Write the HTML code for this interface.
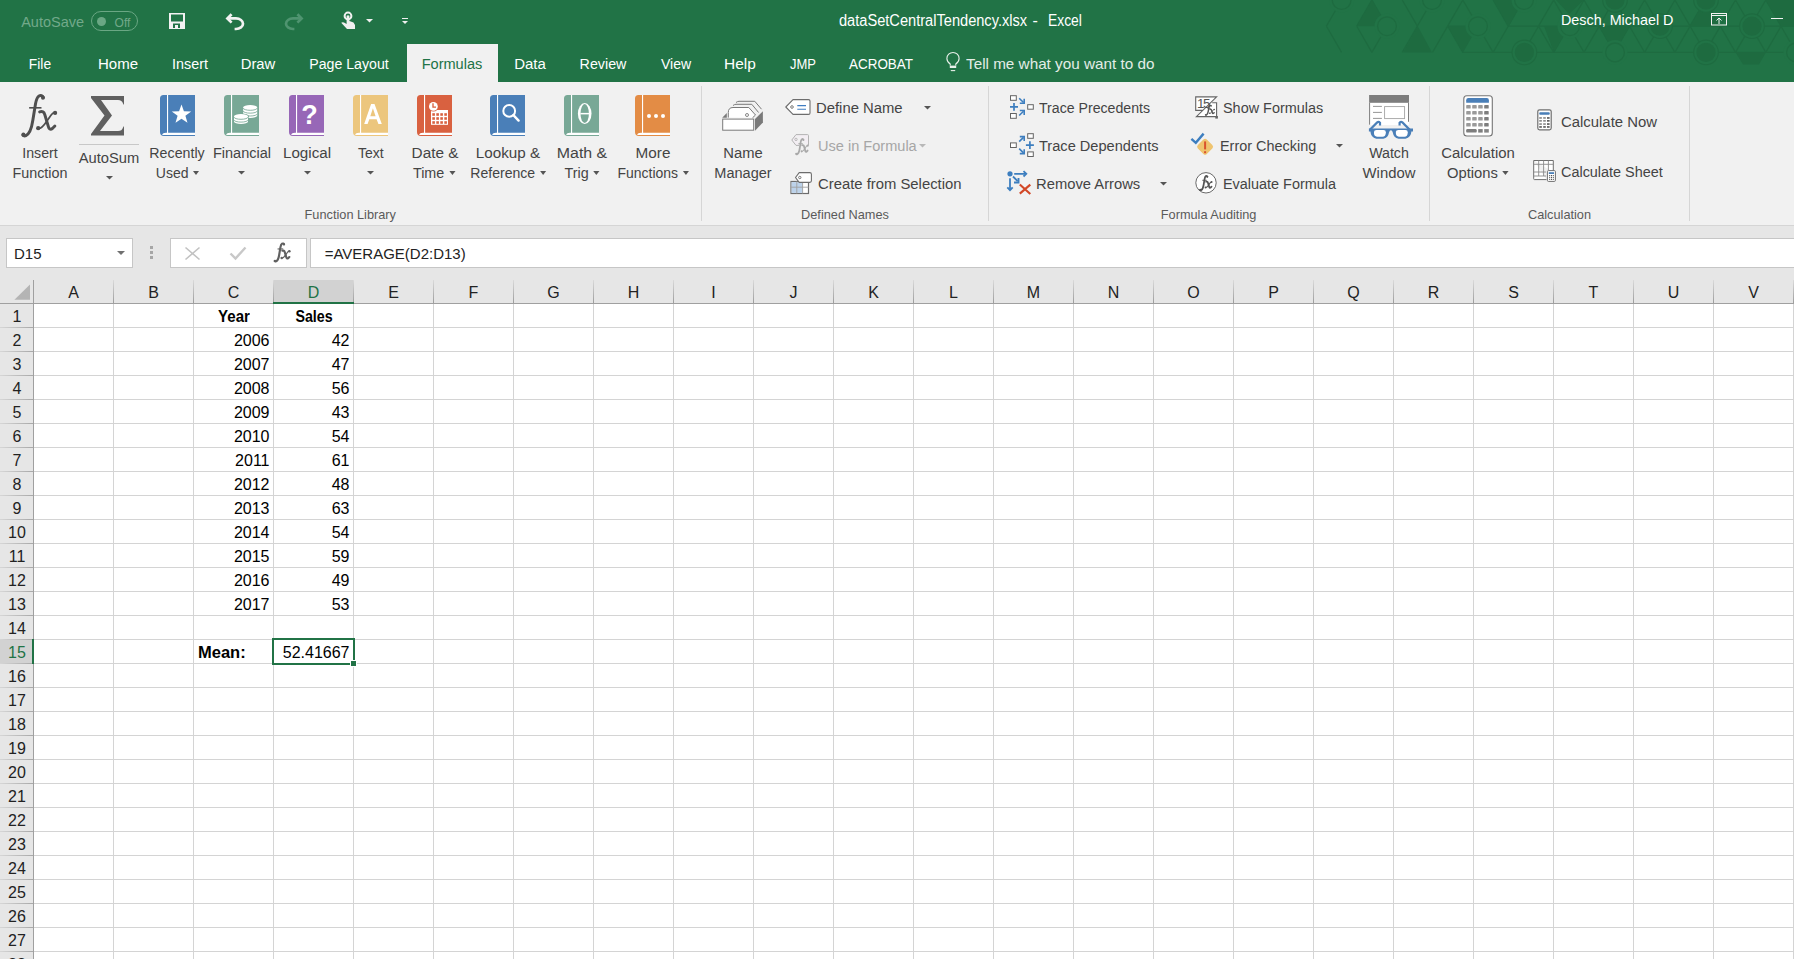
<!DOCTYPE html>
<html><head><meta charset="utf-8"><style>
*{margin:0;padding:0;box-sizing:border-box}
html,body{width:1794px;height:959px;overflow:hidden;background:#fff;font-family:"Liberation Sans",sans-serif}
.a{position:absolute}
.t{position:absolute;white-space:nowrap;line-height:1}
.dd{display:inline-block;width:0;height:0;border-left:3.5px solid transparent;border-right:3.5px solid transparent;border-top:4px solid #555;vertical-align:middle;margin-left:4.5px;position:relative;top:-1px}
svg{position:absolute;overflow:visible}
</style></head><body>
<div class="a" style="left:0px;top:0px;width:1794px;height:82px;background:#217346;"></div>
<div class="a" style="left:0px;top:82px;width:1794px;height:143px;background:#f1f1f1;"></div>
<div class="a" style="left:0px;top:225px;width:1794px;height:1px;background:#d5d5d5;"></div>
<div class="a" style="left:0px;top:226px;width:1794px;height:54px;background:#e6e6e6;"></div>
<div class="a" style="left:0px;top:280px;width:1794px;height:679px;background:#ffffff;"></div>
<div class="a" style="left:0px;top:280px;width:1794px;height:23px;background:#e6e6e6;"></div>
<div class="a" style="left:0px;top:303px;width:33px;height:656px;background:#e6e6e6;"></div>
<svg style="left:1290px;top:0" width="504" height="82" viewBox="0 0 504 82"><g opacity="1"><path d="M51.6 0.0L36.4 26.2 M81.9 0.0L97.0 26.2 M81.9 0.0L66.7 26.2 M112.2 0.0L127.4 26.2 M142.5 0.0L127.3 26.2 M172.8 0.0L188.0 26.2 M172.8 0.0L157.6 26.2 M203.1 0.0L218.2 26.2 M233.4 0.0L218.2 26.2 M263.7 0.0L278.9 26.2 M263.7 0.0L248.5 26.2 M294.0 0.0L309.2 26.2 M294.0 0.0L278.8 26.2 M324.3 0.0L339.5 26.2 M324.3 0.0L309.1 26.2 M354.6 0.0L369.8 26.2 M354.6 0.0L339.4 26.2 M384.9 0.0L400.1 26.2 M384.9 0.0L369.8 26.2 M415.2 0.0L430.4 26.2 M415.2 0.0L400.0 26.2 M445.5 0.0L460.7 26.2 M445.5 0.0L430.3 26.2 M475.8 0.0L491.0 26.2 M475.8 0.0L460.6 26.2 M506.1 0.0L521.2 26.2 M506.1 0.0L490.9 26.2 M536.4 0.0L551.6 26.2 M536.4 0.0L521.2 26.2 M36.5 26.2L51.6 52.4 M66.8 26.2L81.9 52.4 M97.0 26.2L81.9 52.4 M127.4 26.2L112.2 52.4 M157.7 26.2L188.0 26.2 M157.7 26.2L172.8 52.4 M157.7 26.2L142.5 52.4 M188.0 26.2L203.1 52.4 M218.2 26.2L248.5 26.2 M218.2 26.2L203.1 52.4 M248.5 26.2L278.8 26.2 M248.5 26.2L263.7 52.4 M248.5 26.2L233.4 52.4 M278.9 26.2L309.2 26.2 M278.9 26.2L294.0 52.4 M278.9 26.2L263.7 52.4 M309.2 26.2L339.5 26.2 M309.2 26.2L324.3 52.4 M309.2 26.2L294.0 52.4 M339.5 26.2L369.8 26.2 M339.5 26.2L354.6 52.4 M339.5 26.2L324.3 52.4 M369.8 26.2L400.0 26.2 M369.8 26.2L384.9 52.4 M369.8 26.2L354.6 52.4 M400.1 26.2L430.4 26.2 M400.1 26.2L415.2 52.4 M400.1 26.2L384.9 52.4 M430.4 26.2L460.7 26.2 M430.4 26.2L445.5 52.4 M430.4 26.2L415.2 52.4 M460.7 26.2L491.0 26.2 M460.7 26.2L475.8 52.4 M460.7 26.2L445.5 52.4 M491.0 26.2L521.2 26.2 M491.0 26.2L506.1 52.4 M491.0 26.2L475.8 52.4 M521.2 26.2L551.5 26.2 M521.2 26.2L536.4 52.4 M521.2 26.2L506.1 52.4 M551.6 26.2L581.9 26.2 M551.6 26.2L566.7 52.4 M551.6 26.2L536.4 52.4 M172.8 52.4L203.1 52.4 M203.1 52.4L233.4 52.4 M233.4 52.4L263.7 52.4 M263.7 52.4L294.0 52.4 M294.0 52.4L324.3 52.4 M324.3 52.4L354.6 52.4 M354.6 52.4L384.9 52.4 M384.9 52.4L415.2 52.4 M415.2 52.4L445.5 52.4 M445.5 52.4L475.8 52.4 M475.8 52.4L506.1 52.4 M506.1 52.4L536.4 52.4 M536.4 52.4L566.7 52.4" stroke="#1e6b40" stroke-width="1.3" fill="none"/><polygon points="82.0,0.0 97.0,26.2 67.0,26.2" fill="#1e6b40"/><polygon points="113.0,52.4 127.8,26.2 142.0,52.4" fill="#1e6b40"/><polygon points="158.0,26.2 188.0,26.2 173.0,52.4" fill="#1e6b40"/><polygon points="203.0,0.0 218.6,26.2 233.0,0.0" fill="#1e6b40"/><polygon points="254.0,26.2 278.8,26.2 264.0,52.4" fill="#1e6b40"/><polygon points="266.0,0.0 294.0,0.0 279.0,14.0" fill="#1e6b40"/><polygon points="309.0,26.2 339.6,26.2 324.3,52.4" fill="#1e6b40"/><polygon points="400.0,26.2 430.0,26.2 415.0,0.0" fill="#1e6b40"/><polygon points="445.6,52.4 475.9,52.4 469.0,64.5 453.0,64.5" fill="#1e6b40"/><polygon points="475.9,0.0 491.0,26.2 504.0,26.2 504.0,0.0" fill="#1e6b40"/><circle cx="51.6" cy="0.0" r="12.5" fill="#217346"/><circle cx="97.0" cy="26.2" r="12.5" fill="#217346"/><circle cx="188.0" cy="26.2" r="12.5" fill="#217346"/><circle cx="142.0" cy="0.0" r="12.5" fill="#217346"/><circle cx="234.0" cy="0.0" r="12.5" fill="#217346"/><circle cx="280.0" cy="26.2" r="12.5" fill="#217346"/><circle cx="325.0" cy="52.4" r="12.5" fill="#217346"/><circle cx="506.0" cy="52.4" r="12.5" fill="#217346"/><circle cx="234.4" cy="52.4" r="12.5" fill="#217346"/><circle cx="325.0" cy="0.0" r="12.5" fill="#217346"/><circle cx="370.0" cy="26.2" r="12.5" fill="#217346"/><circle cx="416.0" cy="52.4" r="12.5" fill="#217346"/><circle cx="416.0" cy="0.0" r="12.5" fill="#217346"/><circle cx="462.0" cy="26.2" r="12.5" fill="#217346"/><circle cx="51.6" cy="0.0" r="9.4" fill="none" stroke="#1e6b40" stroke-width="1.3"/><circle cx="97.0" cy="26.2" r="9.4" fill="none" stroke="#1e6b40" stroke-width="1.3"/><circle cx="188.0" cy="26.2" r="9.4" fill="none" stroke="#1e6b40" stroke-width="1.3"/><circle cx="142.0" cy="0.0" r="9.4" fill="none" stroke="#1e6b40" stroke-width="1.3"/><circle cx="234.0" cy="0.0" r="9.4" fill="none" stroke="#1e6b40" stroke-width="1.3"/><circle cx="280.0" cy="26.2" r="9.4" fill="none" stroke="#1e6b40" stroke-width="1.3"/><circle cx="325.0" cy="52.4" r="9.4" fill="none" stroke="#1e6b40" stroke-width="1.3"/><circle cx="506.0" cy="52.4" r="9.4" fill="none" stroke="#1e6b40" stroke-width="1.3"/><circle cx="234.4" cy="52.4" r="9.6" fill="#1e6b40"/><circle cx="234.4" cy="52.4" r="12.3" fill="none" stroke="#1e6b40" stroke-width="1.1"/><circle cx="325.0" cy="0.0" r="9.6" fill="#1e6b40"/><circle cx="325.0" cy="0.0" r="12.3" fill="none" stroke="#1e6b40" stroke-width="1.1"/><circle cx="370.0" cy="26.2" r="9.6" fill="#1e6b40"/><circle cx="370.0" cy="26.2" r="12.3" fill="none" stroke="#1e6b40" stroke-width="1.1"/><circle cx="416.0" cy="52.4" r="9.6" fill="#1e6b40"/><circle cx="416.0" cy="52.4" r="12.3" fill="none" stroke="#1e6b40" stroke-width="1.1"/><circle cx="416.0" cy="0.0" r="9.6" fill="#1e6b40"/><circle cx="416.0" cy="0.0" r="12.3" fill="none" stroke="#1e6b40" stroke-width="1.1"/><circle cx="462.0" cy="26.2" r="9.6" fill="#1e6b40"/><circle cx="462.0" cy="26.2" r="12.3" fill="none" stroke="#1e6b40" stroke-width="1.1"/></g></svg>
<div class="t" style="left:21.20px;top:15.33px;font-size:14.5px;color:#72a98a;font-weight:normal;">AutoSave</div>
<div class="a" style="left:91px;top:11px;width:47px;height:20px;border:1px solid #6aa784;border-radius:10px"></div>
<div class="a" style="left:96.5px;top:16.5px;width:9px;height:9px;border-radius:50%;background:#6aa784"></div>
<div class="t" style="left:114.60px;top:16.64px;font-size:12px;color:#72a98a;font-weight:normal;">Off</div>
<svg style="left:169px;top:13px" width="16" height="16" viewBox="0 0 16 16"><path fill="#f2f2f2" fill-rule="evenodd" d="M0 0H16V16H0Z M2 1.5H14V8.5H2Z M4 10.5H11V15H4Z"/><path fill="#f2f2f2" d="M6 12H9V15H6Z"/></svg>
<svg style="left:226px;top:13px" width="19" height="17" viewBox="0 0 19 17"><path d="M1.8 5.4 H10 A7 5.3 0 0 1 10 16 H8.6" fill="none" stroke="#f2f2f2" stroke-width="2.7"/><path d="M5.6 1.2 L1.4 5.4 L5.6 9.6" fill="none" stroke="#f2f2f2" stroke-width="2.7"/></svg>
<svg style="left:283.5px;top:13px" width="19" height="17" viewBox="0 0 19 17"><path d="M17.2 5.4 H9 A7 5.3 0 0 0 9 16 H10.4" fill="none" stroke="#4f9470" stroke-width="2.7"/><path d="M13.4 1.2 L17.6 5.4 L13.4 9.6" fill="none" stroke="#4f9470" stroke-width="2.7"/></svg>
<svg style="left:341px;top:11px" width="15" height="19" viewBox="0 0 15 19"><circle cx="7" cy="5" r="3.4" fill="none" stroke="#f0f0f0" stroke-width="2"/><path fill="#f0f0f0" d="M5.6 4.8 Q7 3.6 8.4 4.8 V10 L12.5 11.5 L14 14 V18 H6 L0.2 11.8 Q1.5 10.7 3 11.5 L5.6 13 Z"/></svg>
<svg style="left:365.50px;top:19px" width="7" height="3.5"><path d="M0 0H7L3.5 3.5Z" fill="#f0f0f0"/></svg>
<div class="a" style="left:402px;top:18px;width:6px;height:1px;background:#f0f0f0;"></div>
<svg style="left:402.00px;top:21px" width="6" height="3"><path d="M0 0H6L3.0 3Z" fill="#f0f0f0"/></svg>
<div class="t" style="left:838.60px;top:12.66px;font-size:16px;color:#ffffff;font-weight:normal;transform:scaleX(0.913);transform-origin:0 0">dataSetCentralTendency.xlsx</div>
<div class="t" style="left:1032.60px;top:12.66px;font-size:16px;color:#ffffff;font-weight:normal;">-</div>
<div class="t" style="left:1047.70px;top:12.66px;font-size:16px;color:#ffffff;font-weight:normal;transform:scaleX(0.866);transform-origin:0 0">Excel</div>
<div class="t" style="left:1560.60px;top:12.00px;font-size:15px;color:#ffffff;font-weight:normal;transform:scaleX(0.957);transform-origin:0 0">Desch, Michael D</div>
<svg style="left:1711px;top:13px" width="16" height="13" viewBox="0 0 16 13"><rect x="0.5" y="0.5" width="15" height="11.5" fill="none" stroke="#f2f2f2" stroke-width="1"/><path d="M0.5 2.5 H15.5" stroke="#f2f2f2" stroke-width="1"/><path d="M8 5 V11 M5.5 7.5 L8 5 L10.5 7.5" fill="none" stroke="#f2f2f2" stroke-width="1"/></svg>
<div class="a" style="left:1771px;top:18px;width:12px;height:1px;background:#f2f2f2;"></div>
<div class="a" style="left:407px;top:44px;width:91px;height:38px;background:#f1f1f1;"></div>
<div class="t" style="left:-259.55px;width:600px;text-align:center;top:56.08px;font-size:15.5px;color:#ffffff;font-weight:normal;transform:scaleX(0.891)">File</div>
<div class="t" style="left:-181.70px;width:600px;text-align:center;top:56.08px;font-size:15.5px;color:#ffffff;font-weight:normal;transform:scaleX(0.968)">Home</div>
<div class="t" style="left:-110.40px;width:600px;text-align:center;top:56.08px;font-size:15.5px;color:#ffffff;font-weight:normal;transform:scaleX(0.926)">Insert</div>
<div class="t" style="left:-41.80px;width:600px;text-align:center;top:56.08px;font-size:15.5px;color:#ffffff;font-weight:normal;transform:scaleX(0.957)">Draw</div>
<div class="t" style="left:48.60px;width:600px;text-align:center;top:56.08px;font-size:15.5px;color:#ffffff;font-weight:normal;transform:scaleX(0.912)">Page Layout</div>
<div class="t" style="left:151.70px;width:600px;text-align:center;top:56.08px;font-size:15.5px;color:#217346;font-weight:normal;transform:scaleX(0.940)">Formulas</div>
<div class="t" style="left:230.35px;width:600px;text-align:center;top:56.08px;font-size:15.5px;color:#ffffff;font-weight:normal;transform:scaleX(0.968)">Data</div>
<div class="t" style="left:303.20px;width:600px;text-align:center;top:56.08px;font-size:15.5px;color:#ffffff;font-weight:normal;transform:scaleX(0.920)">Review</div>
<div class="t" style="left:375.50px;width:600px;text-align:center;top:56.08px;font-size:15.5px;color:#ffffff;font-weight:normal;transform:scaleX(0.905)">View</div>
<div class="t" style="left:440.35px;width:600px;text-align:center;top:56.08px;font-size:15.5px;color:#ffffff;font-weight:normal;transform:scaleX(0.997)">Help</div>
<div class="t" style="left:502.60px;width:600px;text-align:center;top:56.08px;font-size:15.5px;color:#ffffff;font-weight:normal;transform:scaleX(0.839)">JMP</div>
<div class="t" style="left:580.85px;width:600px;text-align:center;top:56.08px;font-size:15.5px;color:#ffffff;font-weight:normal;transform:scaleX(0.867)">ACROBAT</div>
<svg style="left:946px;top:52px" width="14" height="20" viewBox="0 0 14 20"><path d="M4.2 13.5 V12 Q0.9 9.6 0.9 6.4 A6.1 5.9 0 0 1 13.1 6.4 Q13.1 9.6 9.8 12 V13.5" fill="none" stroke="#e8f0ea" stroke-width="1.1"/><rect x="3.8" y="13.6" width="6.4" height="2.4" fill="#e8f0ea"/><path d="M4.8 18.6 H9.2" stroke="#e8f0ea" stroke-width="1.1"/></svg>
<div class="t" style="left:966.30px;top:56.40px;font-size:15px;color:#e4ede7;font-weight:normal;transform:scaleX(1.018);transform-origin:0 0">Tell me what you want to do</div>
<div class="a" style="left:701px;top:86px;width:1px;height:135px;background:#d6d6d6;"></div>
<div class="a" style="left:988px;top:86px;width:1px;height:135px;background:#d6d6d6;"></div>
<div class="a" style="left:1429px;top:86px;width:1px;height:135px;background:#d6d6d6;"></div>
<div class="a" style="left:1689px;top:86px;width:1px;height:135px;background:#d6d6d6;"></div>
<div class="t" style="left:50.30px;width:600px;text-align:center;top:209.01px;font-size:12.75px;color:#5a5a5a;font-weight:normal;">Function Library</div>
<div class="t" style="left:545.00px;width:600px;text-align:center;top:209.01px;font-size:12.75px;color:#5a5a5a;font-weight:normal;">Defined Names</div>
<div class="t" style="left:908.60px;width:600px;text-align:center;top:209.01px;font-size:12.75px;color:#5a5a5a;font-weight:normal;">Formula Auditing</div>
<div class="t" style="left:1259.50px;width:600px;text-align:center;top:209.01px;font-size:12.75px;color:#5a5a5a;font-weight:normal;">Calculation</div>
<svg style="left:17.06px;top:89.89px" width="45.29" height="51.20" viewBox="0 0 44 50" preserveAspectRatio="none"><path d="M25.6 7.2 C25 5.4 23 4.8 21.4 5.8 C19.2 7.2 18.5 10.5 18 13.5 L15.3 30 C14.4 36 12.6 42.6 8.6 44.6 C7.4 45.2 6.2 44.8 5.8 44" fill="none" stroke="#4f4f4f" stroke-width="2.88" stroke-linecap="round"/><circle cx="25.2" cy="7.6" r="1.92" fill="#4f4f4f"/><circle cx="6.2" cy="43.6" r="1.97" fill="#4f4f4f"/><path d="M11.8 17.4 H23.8" stroke="#4f4f4f" stroke-width="1.56"/><path d="M22 21.4 C24.6 20.6 26.2 21.2 27 24 L30.4 35.5 C31 38 32.4 39.2 34.4 37.6 L36.8 35.2" fill="none" stroke="#4f4f4f" stroke-width="2.88" stroke-linecap="round"/><path d="M20.8 37.6 C23.2 37.8 25.4 35.8 28.6 31 L33 24.6 C34.4 22.6 35.8 21.8 37.2 22.2" fill="none" stroke="#4f4f4f" stroke-width="1.68"/><circle cx="20.6" cy="37.3" r="2.08" fill="#4f4f4f"/><circle cx="37" cy="22.4" r="2.08" fill="#4f4f4f"/></svg>
<div class="t" style="left:-260.00px;width:600px;text-align:center;top:145.85px;font-size:14px;color:#444444;font-weight:normal;transform:scaleX(1.014)">Insert</div>
<div class="t" style="left:-260.00px;width:600px;text-align:center;top:165.95px;font-size:14px;color:#444444;font-weight:normal;transform:scaleX(1.024)">Function</div>
<svg style="left:90px;top:96px;" width="35" height="40" viewBox="0 0 35 40"><path d="M1 0 H34 V9 L33 7.5 Q32 4 28 4 H11 L22 19.5 L10 35 H28 Q32 35 33 31.5 L34 30 V39.5 H1 V38 L14.5 19.5 L1 2Z" fill="#606060"/></svg>
<div class="a" style="left:79px;top:144px;width:60px;height:1px;background:#c8c8c8;"></div>
<div class="t" style="left:-191.40px;width:600px;text-align:center;top:150.85px;font-size:14px;color:#444444;font-weight:normal;transform:scaleX(1.052)">AutoSum</div>
<svg style="left:105.50px;top:176px" width="7" height="3.5"><path d="M0 0H7L3.5 3.5Z" fill="#555"/></svg>
<svg style="left:160px;top:95px;" width="35" height="41" viewBox="0 0 35 41"><path d="M3.5 0 H35 V41 H4 A4 4 0 0 1 0 37 V3.5 A3.5 3.5 0 0 1 3.5 0 Z" fill="#4a7fb8"/><rect x="7" y="0" width="1.1" height="38" fill="#fff"/><path d="M35 37.8 H6 Q2.6 37.8 2.2 40 H35 Z" fill="#fff"/><polygon points="21.50,9.40 23.91,16.28 31.20,16.45 25.40,20.87 27.50,27.85 21.50,23.70 15.50,27.85 17.60,20.87 11.80,16.45 19.09,16.28" fill="#fff"/></svg>
<div class="t" style="left:-122.60px;width:600px;text-align:center;top:145.85px;font-size:14px;color:#444444;font-weight:normal;transform:scaleX(1.015)">Recently</div>
<div class="t" style="left:-122.60px;width:600px;text-align:center;top:165.95px;font-size:14px;color:#444444;font-weight:normal;transform:scaleX(1.0)">Used<span class="dd"></span></div>
<svg style="left:224px;top:95px;" width="35" height="41" viewBox="0 0 35 41"><path d="M3.5 0 H35 V41 H4 A4 4 0 0 1 0 37 V3.5 A3.5 3.5 0 0 1 3.5 0 Z" fill="#78a896"/><rect x="7" y="0" width="1.1" height="38" fill="#fff"/><path d="M35 37.8 H6 Q2.6 37.8 2.2 40 H35 Z" fill="#fff"/><ellipse cx="26.2" cy="12.2" rx="7" ry="2.2" fill="#fff"/><rect x="19.2" y="12.2" width="14" height="8.55" fill="#fff"/><ellipse cx="26.2" cy="20.75" rx="7" ry="2.2" fill="#fff"/><path d="M19.2 13.1 A7 2.2 0 0 0 33.2 13.1" fill="none" stroke="#78a896" stroke-width="0.85"/><path d="M19.2 15.95 A7 2.2 0 0 0 33.2 15.95" fill="none" stroke="#78a896" stroke-width="0.85"/><path d="M19.2 18.799999999999997 A7 2.2 0 0 0 33.2 18.799999999999997" fill="none" stroke="#78a896" stroke-width="0.85"/><ellipse cx="17" cy="21.4" rx="8" ry="3" fill="#78a896"/><ellipse cx="17" cy="21.2" rx="7" ry="2.2" fill="#fff"/><rect x="10" y="21.2" width="14" height="5.599999999999998" fill="#fff"/><ellipse cx="17" cy="26.799999999999997" rx="7" ry="2.2" fill="#fff"/><path d="M10 22.099999999999998 A7 2.2 0 0 0 24 22.099999999999998" fill="none" stroke="#78a896" stroke-width="0.85"/><path d="M10 24.9 A7 2.2 0 0 0 24 24.9" fill="none" stroke="#78a896" stroke-width="0.85"/></svg>
<div class="t" style="left:-58.20px;width:600px;text-align:center;top:145.85px;font-size:14px;color:#444444;font-weight:normal;transform:scaleX(1.036)">Financial</div>
<svg style="left:238.30px;top:171px" width="7" height="3.5"><path d="M0 0H7L3.5 3.5Z" fill="#555"/></svg>
<svg style="left:289px;top:95px;" width="35" height="41" viewBox="0 0 35 41"><path d="M3.5 0 H35 V41 H4 A4 4 0 0 1 0 37 V3.5 A3.5 3.5 0 0 1 3.5 0 Z" fill="#9767b7"/><rect x="7" y="0" width="1.1" height="38" fill="#fff"/><path d="M35 37.8 H6 Q2.6 37.8 2.2 40 H35 Z" fill="#fff"/><text x="20.6" y="29" font-family="Liberation Sans" font-weight="bold" font-size="27" fill="#fff" text-anchor="middle">?</text></svg>
<div class="t" style="left:7.10px;width:600px;text-align:center;top:145.85px;font-size:14px;color:#444444;font-weight:normal;transform:scaleX(1.084)">Logical</div>
<svg style="left:303.60px;top:171px" width="7" height="3.5"><path d="M0 0H7L3.5 3.5Z" fill="#555"/></svg>
<svg style="left:353px;top:95px;" width="35" height="41" viewBox="0 0 35 41"><path d="M3.5 0 H35 V41 H4 A4 4 0 0 1 0 37 V3.5 A3.5 3.5 0 0 1 3.5 0 Z" fill="#ecc67d"/><rect x="7" y="0" width="1.1" height="38" fill="#fff"/><path d="M35 37.8 H6 Q2.6 37.8 2.2 40 H35 Z" fill="#fff"/><path d="M11.2 29 L18.1 9 H21.5 L28.8 29 H25.4 L23.6 24.2 H16.3 L14.6 29 Z M17.3 21.3 H22.6 L19.9 13.2 Z" fill="#fff" fill-rule="evenodd"/></svg>
<div class="t" style="left:70.75px;width:600px;text-align:center;top:145.85px;font-size:14px;color:#444444;font-weight:normal;transform:scaleX(1.0)">Text</div>
<svg style="left:367.25px;top:171px" width="7" height="3.5"><path d="M0 0H7L3.5 3.5Z" fill="#555"/></svg>
<svg style="left:417px;top:95px;" width="35" height="41" viewBox="0 0 35 41"><path d="M3.5 0 H35 V41 H4 A4 4 0 0 1 0 37 V3.5 A3.5 3.5 0 0 1 3.5 0 Z" fill="#d96140"/><rect x="7" y="0" width="1.1" height="38" fill="#fff"/><path d="M35 37.8 H6 Q2.6 37.8 2.2 40 H35 Z" fill="#fff"/><rect x="14" y="15" width="17" height="14.8" fill="#fff"/><rect x="15.3" y="18.2" width="2.6" height="2.6" fill="#d96140"/><rect x="19.3" y="18.2" width="2.6" height="2.6" fill="#d96140"/><rect x="23.3" y="18.2" width="2.6" height="2.6" fill="#d96140"/><rect x="27.3" y="18.2" width="2.6" height="2.6" fill="#d96140"/><rect x="15.3" y="22.2" width="2.6" height="2.6" fill="#d96140"/><rect x="19.3" y="22.2" width="2.6" height="2.6" fill="#d96140"/><rect x="23.3" y="22.2" width="2.6" height="2.6" fill="#d96140"/><rect x="27.3" y="22.2" width="2.6" height="2.6" fill="#d96140"/><rect x="15.3" y="26.2" width="2.6" height="2.6" fill="#d96140"/><rect x="19.3" y="26.2" width="2.6" height="2.6" fill="#d96140"/><rect x="23.3" y="26.2" width="2.6" height="2.6" fill="#d96140"/><rect x="27.3" y="26.2" width="2.6" height="2.6" fill="#d96140"/><circle cx="16.4" cy="11.4" r="5.2" fill="#d96140"/><circle cx="16.4" cy="11.4" r="4.4" fill="#fff"/><path d="M16 8.3 V12.1 H19" fill="none" stroke="#d96140" stroke-width="1.35"/></svg>
<div class="t" style="left:134.75px;width:600px;text-align:center;top:145.85px;font-size:14px;color:#444444;font-weight:normal;transform:scaleX(1.095)">Date &amp;</div>
<div class="t" style="left:134.30px;width:600px;text-align:center;top:165.95px;font-size:14px;color:#444444;font-weight:normal;transform:scaleX(1.024)">Time<span class="dd"></span></div>
<svg style="left:490px;top:95px;" width="35" height="41" viewBox="0 0 35 41"><path d="M3.5 0 H35 V41 H4 A4 4 0 0 1 0 37 V3.5 A3.5 3.5 0 0 1 3.5 0 Z" fill="#4a7fb8"/><rect x="7" y="0" width="1.1" height="38" fill="#fff"/><path d="M35 37.8 H6 Q2.6 37.8 2.2 40 H35 Z" fill="#fff"/><circle cx="19.2" cy="15.9" r="5.9" fill="none" stroke="#fff" stroke-width="2"/><path d="M23.4 20.2 L28.6 25.6" stroke="#fff" stroke-width="2.4" stroke-linecap="round"/></svg>
<div class="t" style="left:208.10px;width:600px;text-align:center;top:145.85px;font-size:14px;color:#444444;font-weight:normal;transform:scaleX(1.088)">Lookup &amp;</div>
<div class="t" style="left:208.00px;width:600px;text-align:center;top:165.95px;font-size:14px;color:#444444;font-weight:normal;transform:scaleX(1.004)">Reference<span class="dd"></span></div>
<svg style="left:564px;top:95px;" width="35" height="41" viewBox="0 0 35 41"><path d="M3.5 0 H35 V41 H4 A4 4 0 0 1 0 37 V3.5 A3.5 3.5 0 0 1 3.5 0 Z" fill="#78a896"/><rect x="7" y="0" width="1.1" height="38" fill="#fff"/><path d="M35 37.8 H6 Q2.6 37.8 2.2 40 H35 Z" fill="#fff"/><ellipse cx="20.7" cy="18.6" rx="6.8" ry="10.5" fill="#fff"/><ellipse cx="20.7" cy="18.6" rx="4.2" ry="9.5" fill="#78a896"/><rect x="16.3" y="17.9" width="8.8" height="1.5" fill="#fff"/></svg>
<div class="t" style="left:282.00px;width:600px;text-align:center;top:145.85px;font-size:14px;color:#444444;font-weight:normal;transform:scaleX(1.136)">Math &amp;</div>
<div class="t" style="left:282.00px;width:600px;text-align:center;top:165.95px;font-size:14px;color:#444444;font-weight:normal;transform:scaleX(1.024)">Trig<span class="dd"></span></div>
<svg style="left:635px;top:95px;" width="35" height="41" viewBox="0 0 35 41"><path d="M3.5 0 H35 V41 H4 A4 4 0 0 1 0 37 V3.5 A3.5 3.5 0 0 1 3.5 0 Z" fill="#e38c45"/><rect x="7" y="0" width="1.1" height="38" fill="#fff"/><path d="M35 37.8 H6 Q2.6 37.8 2.2 40 H35 Z" fill="#fff"/><circle cx="14" cy="21" r="2" fill="#fff"/><circle cx="21" cy="21" r="2" fill="#fff"/><circle cx="28" cy="21" r="2" fill="#fff"/></svg>
<div class="t" style="left:352.80px;width:600px;text-align:center;top:145.85px;font-size:14px;color:#444444;font-weight:normal;transform:scaleX(1.091)">More</div>
<div class="t" style="left:352.50px;width:600px;text-align:center;top:165.95px;font-size:14px;color:#444444;font-weight:normal;transform:scaleX(0.998)">Functions<span class="dd"></span></div>
<svg style="left:715px;top:95px;" width="55" height="42" viewBox="0 0 55 42"><path d="M21 7.5 Q22.5 6.3 24 6.3 H39.8 L46.5 14.2" fill="none" stroke="#7a7a7a" stroke-width="1"/><path d="M18 10.5 Q19.5 9.3 21 9.3 H36.8 L43.6 17.5" fill="none" stroke="#7a7a7a" stroke-width="1"/><path d="M13.3 22.6 V17.5 Q13.3 12.5 18 12.5 H33.8 L40.5 20 L37.5 22.8" fill="#fff" stroke="#7a7a7a" stroke-width="1"/><circle cx="32" cy="20" r="1.5" fill="none" stroke="#7a7a7a" stroke-width="0.9"/><path d="M7.2 22.8 L11.8 18 V22.8 Z" fill="#7a7a7a"/><rect x="7.7" y="24.1" width="31" height="11.1" fill="#fff" stroke="#7a7a7a" stroke-width="1"/><path d="M40 23.9 L47.9 16.2 V27.6 L40 35.7 Z" fill="#7a7a7a"/></svg>
<div class="t" style="left:443.20px;width:600px;text-align:center;top:145.85px;font-size:14px;color:#444444;font-weight:normal;transform:scaleX(1.056)">Name</div>
<div class="t" style="left:442.60px;width:600px;text-align:center;top:165.95px;font-size:14px;color:#444444;font-weight:normal;transform:scaleX(1.037)">Manager</div>
<svg style="left:785px;top:99px;" width="26" height="16" viewBox="0 0 26 16"><path d="M8 0.6 H23.5 Q25 0.6 25 2 V14 Q25 15.4 23.5 15.4 H8 L0.8 8 Z" fill="#fff" stroke="#6d6d6d" stroke-width="1.1" stroke-linejoin="round"/><circle cx="7" cy="8" r="1.3" fill="none" stroke="#6d6d6d" stroke-width="0.9"/><path d="M12.3 6.6 H21 M12.3 10.3 H21" stroke="#3f7dc1" stroke-width="1.1"/></svg>
<div class="t" style="left:816.00px;top:101.25px;font-size:14px;color:#444444;font-weight:normal;transform:scaleX(1.06);transform-origin:0 0">Define Name</div>
<svg style="left:923.50px;top:105.5px" width="7" height="3.5"><path d="M0 0H7L3.5 3.5Z" fill="#555"/></svg>
<svg style="left:791px;top:134px;" width="20" height="22" viewBox="0 0 20 22"><path d="M5 0.6 H16.5 Q17.5 0.6 17.5 1.6 V11.5 M8 11.4 H5 L0.8 6 L5 0.6" fill="#f3eef3" stroke="#b3b3b3" stroke-width="1"/><circle cx="5" cy="5.4" r="1.2" fill="none" stroke="#b3b3b3" stroke-width="0.9"/></svg>
<svg style="left:794.22px;top:137.07px" width="16.31" height="19.28" viewBox="0 0 44 50" preserveAspectRatio="none"><path d="M25.6 7.2 C25 5.4 23 4.8 21.4 5.8 C19.2 7.2 18.5 10.5 18 13.5 L15.3 30 C14.4 36 12.6 42.6 8.6 44.6 C7.4 45.2 6.2 44.8 5.8 44" fill="none" stroke="#a9a9a9" stroke-width="4.8" stroke-linecap="round"/><circle cx="25.2" cy="7.6" r="2.47" fill="#a9a9a9"/><circle cx="6.2" cy="43.6" r="2.55" fill="#a9a9a9"/><path d="M11.8 17.4 H23.8" stroke="#a9a9a9" stroke-width="2.6"/><path d="M22 21.4 C24.6 20.6 26.2 21.2 27 24 L30.4 35.5 C31 38 32.4 39.2 34.4 37.6 L36.8 35.2" fill="none" stroke="#a9a9a9" stroke-width="4.8" stroke-linecap="round"/><path d="M20.8 37.6 C23.2 37.8 25.4 35.8 28.6 31 L33 24.6 C34.4 22.6 35.8 21.8 37.2 22.2" fill="none" stroke="#a9a9a9" stroke-width="2.8"/><circle cx="20.6" cy="37.3" r="2.69" fill="#a9a9a9"/><circle cx="37" cy="22.4" r="2.69" fill="#a9a9a9"/></svg>
<div class="t" style="left:818.00px;top:139.25px;font-size:14px;color:#a6a6a6;font-weight:normal;transform:scaleX(1.04);transform-origin:0 0">Use in Formula</div>
<svg style="left:918.50px;top:143.5px" width="7" height="3.5"><path d="M0 0H7L3.5 3.5Z" fill="#b8b8b8"/></svg>
<svg style="left:790px;top:172px;" width="23" height="23" viewBox="0 0 23 23"><rect x="1" y="9.5" width="17.5" height="12" fill="#fff" stroke="#6d6d6d" stroke-width="1.2"/><rect x="1.6" y="10.1" width="11" height="10.8" fill="#bcd2ea"/><path d="M6.8 9.5 V21.5 M12.6 9.5 V21.5 M1 15.2 H18.5" stroke="#a0a0a0" stroke-width="0.9"/><path d="M9.2 0.6 H19.8 Q21.4 0.6 21.4 2.2 V8.8 Q21.4 10.4 19.8 10.4 H9.2 L5.5 5.5 Z" fill="#fff" stroke="#6d6d6d" stroke-width="1.1" stroke-linejoin="round"/><circle cx="9.8" cy="5.5" r="1.2" fill="none" stroke="#6d6d6d" stroke-width="0.9"/></svg>
<div class="t" style="left:818.00px;top:177.25px;font-size:14px;color:#444444;font-weight:normal;transform:scaleX(1.06);transform-origin:0 0">Create from Selection</div>
<svg style="left:1003px;top:92px;" width="37" height="105" viewBox="0 0 37 105"><rect x="7.5" y="3.7" width="5.800000000000001" height="4.6000000000000005" fill="#fff" stroke="#646464" stroke-width="1"/><path d="M7 14.9 H15 M11 11.0 V18.8" stroke="#3d7ebf" stroke-width="1.7"/><rect x="7.5" y="21.5" width="5.800000000000001" height="4.800000000000001" fill="#fff" stroke="#646464" stroke-width="1"/><rect x="24.7" y="12.7" width="5.600000000000001" height="4.5" fill="#fff" stroke="#646464" stroke-width="1"/><path d="M16.2 6.2 L20.49 10.49" stroke="#3d7ebf" stroke-width="1.6"/><path d="M16.80 11.20 L21.20 11.20 L21.20 6.80" fill="none" stroke="#3d7ebf" stroke-width="1.6" stroke-linejoin="miter"/><path d="M16.2 23.5 L20.49 19.21" stroke="#3d7ebf" stroke-width="1.6"/><path d="M21.20 22.90 L21.20 18.50 L16.80 18.50" fill="none" stroke="#3d7ebf" stroke-width="1.6" stroke-linejoin="miter"/><rect x="7.5" y="50.9" width="5.800000000000001" height="4.600000000000001" fill="#fff" stroke="#646464" stroke-width="1"/><rect x="24.7" y="41.7" width="5.600000000000001" height="4.599999999999994" fill="#fff" stroke="#646464" stroke-width="1"/><path d="M22.9 53.1 H30.9 M26.9 49.2 V57.0" stroke="#3d7ebf" stroke-width="1.7"/><rect x="24.7" y="59.9" width="5.600000000000001" height="4.600000000000001" fill="#fff" stroke="#646464" stroke-width="1"/><path d="M16.2 49.6 L20.49 45.31" stroke="#3d7ebf" stroke-width="1.6"/><path d="M21.20 49.00 L21.20 44.60 L16.80 44.60" fill="none" stroke="#3d7ebf" stroke-width="1.6" stroke-linejoin="miter"/><path d="M16.2 56.6 L20.49 60.89" stroke="#3d7ebf" stroke-width="1.6"/><path d="M16.80 61.60 L21.20 61.60 L21.20 57.20" fill="none" stroke="#3d7ebf" stroke-width="1.6" stroke-linejoin="miter"/><circle cx="7" cy="81.8" r="2.6" fill="#3d7ebf"/><path d="M11.2 81.8 H22.8 M7 86.3 V97.6 M10 84.5 L14.6 89.1" stroke="#3d7ebf" stroke-width="1.8"/><path d="M20.5 79.2 L23.3 81.8 L20.5 84.5 M4.3 95.3 L7 98.2 L9.7 95.3" fill="none" stroke="#3d7ebf" stroke-width="1.8"/><path d="M15.5 86 V90.5 H11" fill="none" stroke="#3d7ebf" stroke-width="1.9"/><path d="M16.8 92.5 L27.3 102 M16.8 101.6 L27.3 92.6" stroke="#d24726" stroke-width="2.1"/></svg>
<div class="t" style="left:1039.00px;top:101.25px;font-size:14px;color:#444444;font-weight:normal;transform:scaleX(1.01);transform-origin:0 0">Trace Precedents</div>
<div class="t" style="left:1039.00px;top:139.25px;font-size:14px;color:#444444;font-weight:normal;transform:scaleX(1.042);transform-origin:0 0">Trace Dependents</div>
<div class="t" style="left:1036.00px;top:177.25px;font-size:14px;color:#444444;font-weight:normal;transform:scaleX(1.055);transform-origin:0 0">Remove Arrows</div>
<svg style="left:1160.00px;top:181.5px" width="7" height="3.5"><path d="M0 0H7L3.5 3.5Z" fill="#555"/></svg>
<svg style="left:1186px;top:92px;" width="36" height="105" viewBox="0 0 36 105"><path d="M9.8 4.6 H30.8 L10.4 25 H30.8 V10.3 H26.3 L16.6 18.4 H9.8 Z" fill="#fff"/><path d="M16.6 18.4 H9.7 V4.9 H30.6 L10.4 24.6 H30.6 V10.8 H26.2" fill="none" stroke="#646464" stroke-width="1.1"/><text x="10.9" y="15.7" font-family="Liberation Sans" font-size="13.4" fill="#555" letter-spacing="-1.3">15</text><rect x="29.3" y="24" width="2.6" height="2.6" fill="#646464"/><rect x="12.8" y="48.4" width="12.6" height="12.6" rx="2.4" transform="rotate(45 19.1 54.7)" fill="#efc46f"/><path d="M19.1 49.4 V57.4" stroke="#d9532d" stroke-width="2"/><rect x="18.1" y="59.2" width="2" height="2" fill="#d9532d"/><path d="M5.4 46.8 L9.8 50.8 L17.6 41.6" fill="none" stroke="#3d7ebf" stroke-width="2.4"/><circle cx="20" cy="90.8" r="10.2" fill="#fff" stroke="#6a6a6a" stroke-width="1"/></svg>
<svg style="left:1197.74px;top:173.87px" width="16.18" height="18.07" viewBox="0 0 44 50" preserveAspectRatio="none"><path d="M25.6 7.2 C25 5.4 23 4.8 21.4 5.8 C19.2 7.2 18.5 10.5 18 13.5 L15.3 30 C14.4 36 12.6 42.6 8.6 44.6 C7.4 45.2 6.2 44.8 5.8 44" fill="none" stroke="#555555" stroke-width="4.8" stroke-linecap="round"/><circle cx="25.2" cy="7.6" r="2.47" fill="#555555"/><circle cx="6.2" cy="43.6" r="2.55" fill="#555555"/><path d="M11.8 17.4 H23.8" stroke="#555555" stroke-width="2.6"/><path d="M22 21.4 C24.6 20.6 26.2 21.2 27 24 L30.4 35.5 C31 38 32.4 39.2 34.4 37.6 L36.8 35.2" fill="none" stroke="#555555" stroke-width="4.8" stroke-linecap="round"/><path d="M20.8 37.6 C23.2 37.8 25.4 35.8 28.6 31 L33 24.6 C34.4 22.6 35.8 21.8 37.2 22.2" fill="none" stroke="#555555" stroke-width="2.8"/><circle cx="20.6" cy="37.3" r="2.69" fill="#555555"/><circle cx="37" cy="22.4" r="2.69" fill="#555555"/></svg>
<svg style="left:1203.97px;top:103.98px" width="12.16" height="12.41" viewBox="0 0 44 50" preserveAspectRatio="none"><path d="M25.6 7.2 C25 5.4 23 4.8 21.4 5.8 C19.2 7.2 18.5 10.5 18 13.5 L15.3 30 C14.4 36 12.6 42.6 8.6 44.6 C7.4 45.2 6.2 44.8 5.8 44" fill="none" stroke="#555555" stroke-width="5.28" stroke-linecap="round"/><circle cx="25.2" cy="7.6" r="2.60" fill="#555555"/><circle cx="6.2" cy="43.6" r="2.67" fill="#555555"/><path d="M11.8 17.4 H23.8" stroke="#555555" stroke-width="2.8600000000000003"/><path d="M22 21.4 C24.6 20.6 26.2 21.2 27 24 L30.4 35.5 C31 38 32.4 39.2 34.4 37.6 L36.8 35.2" fill="none" stroke="#555555" stroke-width="5.28" stroke-linecap="round"/><path d="M20.8 37.6 C23.2 37.8 25.4 35.8 28.6 31 L33 24.6 C34.4 22.6 35.8 21.8 37.2 22.2" fill="none" stroke="#555555" stroke-width="3.08"/><circle cx="20.6" cy="37.3" r="2.82" fill="#555555"/><circle cx="37" cy="22.4" r="2.82" fill="#555555"/></svg>
<div class="t" style="left:1223.00px;top:101.25px;font-size:14px;color:#444444;font-weight:normal;transform:scaleX(1.03);transform-origin:0 0">Show Formulas</div>
<div class="t" style="left:1220.00px;top:139.25px;font-size:14px;color:#444444;font-weight:normal;transform:scaleX(1.03);transform-origin:0 0">Error Checking</div>
<svg style="left:1336.00px;top:143.5px" width="7" height="3.5"><path d="M0 0H7L3.5 3.5Z" fill="#555"/></svg>
<div class="t" style="left:1223.00px;top:177.25px;font-size:14px;color:#444444;font-weight:normal;transform:scaleX(1.03);transform-origin:0 0">Evaluate Formula</div>
<svg style="left:1360px;top:90px;" width="60" height="50" viewBox="0 0 60 50"><rect x="9.1" y="5" width="39.9" height="30" fill="#fff"/><rect x="9.1" y="5" width="39.9" height="7.8" fill="#7d7d7d"/><path d="M9.6 12.8 V34.7 M48.5 12.8 V31.8" stroke="#7d7d7d" stroke-width="1"/><path d="M13 16.4 H21.9 M13 22.4 H21.9 M13 28.4 H21.9" stroke="#8a8a8a" stroke-width="0.9"/><rect x="24.6" y="16.6" width="20" height="12" fill="#fff" stroke="#a3a3a3" stroke-width="0.9"/><path d="M9.6 40 L17.2 32.4 Q18.6 31.3 20 32.8 V35.5 M50 40 L42.4 32.4 Q41 31.3 39.6 32.8 V35.5" fill="none" stroke="#4a7fb8" stroke-width="2.2"/><path d="M8.9 38.5 H53 V41.6 H51.4 Q51 47.8 45.5 48.7 H38.5 Q33.6 47.9 32.8 42.6 Q32.2 40.2 30.9 40.2 Q29.6 40.2 29 42.6 Q28.2 47.9 23.3 48.7 H16.2 Q10.9 47.8 10.4 41.6 H8.9 Z" fill="#4a7fb8"/><path d="M14 41.8 Q14 40 16.5 40 H23.5 Q25.9 40 25.9 42.4 Q25.7 46.6 22.5 46.7 H17 Q14.2 46.4 14 43.6 Z" fill="#fff"/><path d="M35.9 41.8 Q35.9 40 38.4 40 H45.4 Q47.8 40 47.8 42.4 Q47.6 46.6 44.4 46.7 H38.9 Q36.1 46.4 35.9 43.6 Z" fill="#fff"/></svg>
<div class="t" style="left:1088.90px;width:600px;text-align:center;top:145.85px;font-size:14px;color:#444444;font-weight:normal;transform:scaleX(1.015)">Watch</div>
<div class="t" style="left:1088.50px;width:600px;text-align:center;top:165.95px;font-size:14px;color:#444444;font-weight:normal;transform:scaleX(1.061)">Window</div>
<svg style="left:1455px;top:90px;" width="45" height="50" viewBox="0 0 45 50"><rect x="8.8" y="5.7" width="28.5" height="40.3" rx="3" fill="#fff" stroke="#767676" stroke-width="1.1"/><path d="M11.2 12.8 V10.2 Q11.2 8.1 13.3 8.1 H31.8 Q33.9 8.1 33.9 10.2 V12.8 Z" fill="#4a7fb8"/><rect x="11.2" y="15.1" width="4.5" height="3.5" rx="0.6" fill="#9a9a9a"/><rect x="17.2" y="15.1" width="4.5" height="3.5" rx="0.6" fill="#9a9a9a"/><rect x="23.2" y="15.1" width="4.5" height="3.5" rx="0.6" fill="#9a9a9a"/><rect x="29.2" y="15.1" width="4.5" height="3.5" rx="0.6" fill="#7e7e7e"/><rect x="11.2" y="21.1" width="4.5" height="3.5" rx="0.6" fill="#9a9a9a"/><rect x="17.2" y="21.1" width="4.5" height="3.5" rx="0.6" fill="#9a9a9a"/><rect x="23.2" y="21.1" width="4.5" height="3.5" rx="0.6" fill="#9a9a9a"/><rect x="29.2" y="21.1" width="4.5" height="3.5" rx="0.6" fill="#7e7e7e"/><rect x="11.2" y="27.1" width="4.5" height="3.5" rx="0.6" fill="#9a9a9a"/><rect x="17.2" y="27.1" width="4.5" height="3.5" rx="0.6" fill="#9a9a9a"/><rect x="23.2" y="27.1" width="4.5" height="3.5" rx="0.6" fill="#9a9a9a"/><rect x="29.2" y="27.1" width="4.5" height="3.5" rx="0.6" fill="#7e7e7e"/><rect x="11.2" y="33.1" width="4.5" height="3.5" rx="0.6" fill="#9a9a9a"/><rect x="17.2" y="33.1" width="4.5" height="3.5" rx="0.6" fill="#9a9a9a"/><rect x="23.2" y="33.1" width="4.5" height="3.5" rx="0.6" fill="#9a9a9a"/><rect x="29.2" y="33.1" width="4.5" height="3.5" rx="0.6" fill="#7e7e7e"/><rect x="11.2" y="39.1" width="10.5" height="3.5" rx="1.2" fill="#7e7e7e"/><rect x="23.2" y="39.1" width="4.5" height="3.5" fill="#7e7e7e"/><rect x="29.2" y="39.1" width="4.6" height="3.5" fill="#858585"/></svg>
<div class="t" style="left:1178.00px;width:600px;text-align:center;top:145.85px;font-size:14px;color:#444444;font-weight:normal;transform:scaleX(1.064)">Calculation</div>
<div class="t" style="left:1178.20px;width:600px;text-align:center;top:165.95px;font-size:14px;color:#444444;font-weight:normal;transform:scaleX(1.054)">Options<span class="dd"></span></div>
<svg style="left:1528px;top:105px;" width="32" height="80" viewBox="0 0 32 80"><rect x="9.8" y="4.8" width="13.4" height="20" rx="1.8" fill="#fff" stroke="#6e6e6e" stroke-width="1.2"/><rect x="11.25" y="7.3" width="10.5" height="2.5" rx="1" fill="#4a7fb8"/><rect x="11.25" y="12.1" width="2.6" height="1.7" fill="#8e8e8e"/><rect x="15.2" y="12.1" width="2.6" height="1.7" fill="#8e8e8e"/><rect x="19.0" y="12.1" width="2.6" height="1.7" fill="#5f5f5f"/><rect x="11.25" y="15.0" width="2.6" height="1.7" fill="#8e8e8e"/><rect x="15.2" y="15.0" width="2.6" height="1.7" fill="#8e8e8e"/><rect x="19.0" y="15.0" width="2.6" height="1.7" fill="#5f5f5f"/><rect x="11.25" y="18.2" width="2.6" height="1.7" fill="#8e8e8e"/><rect x="15.2" y="18.2" width="2.6" height="1.7" fill="#8e8e8e"/><rect x="19.0" y="18.2" width="2.6" height="1.7" fill="#5f5f5f"/><rect x="11.25" y="21.1" width="2.6" height="1.7" fill="#5f5f5f"/><rect x="15.2" y="21.1" width="2.6" height="1.7" fill="#5f5f5f"/><rect x="19.0" y="21.1" width="2.6" height="1.7" fill="#5f5f5f"/><path d="M5.7 55.5 H25.3 V67 M5.7 55.5 V73.8 Q5.7 74.6 6.5 74.6 H18.5" fill="#fff" stroke="#6e6e6e" stroke-width="1"/><path d="M5.7 59.3 H25.3 M5.7 67 H18 M5.7 71 H18 M10.7 55.5 V71 M15.6 55.5 V71 M20.4 55.5 V65" stroke="#8a8a8a" stroke-width="0.9"/><rect x="19.4" y="65.6" width="8" height="10.8" rx="1" fill="#fff" stroke="#6e6e6e" stroke-width="1"/><rect x="20.8" y="67.2" width="5.2" height="1.8" fill="#4a7fb8"/><path d="M21.2 70.6 h1 M23 70.6 h1 M24.8 70.6 h1 M21.2 72.6 h1 M23 72.6 h1 M24.8 72.6 h1 M21.2 74.5 h1 M23 74.5 h1 M24.8 74.5 h1" stroke="#555" stroke-width="1.2"/></svg>
<div class="t" style="left:1561.00px;top:115.25px;font-size:14px;color:#444444;font-weight:normal;transform:scaleX(1.063);transform-origin:0 0">Calculate Now</div>
<div class="t" style="left:1561.00px;top:164.75px;font-size:14px;color:#444444;font-weight:normal;transform:scaleX(1.03);transform-origin:0 0">Calculate Sheet</div>
<div class="a" style="left:6px;top:238px;width:127px;height:30px;background:#fff;border:1px solid #c6c6c6"></div>
<div class="t" style="left:14.00px;top:246.30px;font-size:15px;color:#222;font-weight:normal;">D15</div>
<svg style="left:116.60px;top:250.9px" width="8" height="4"><path d="M0 0H8L4.0 4Z" fill="#707070"/></svg>
<div class="a" style="left:150px;top:246px;width:3px;height:3px;background:#a6a6a6;"></div>
<div class="a" style="left:150px;top:251px;width:3px;height:3px;background:#a6a6a6;"></div>
<div class="a" style="left:150px;top:256px;width:3px;height:3px;background:#a6a6a6;"></div>
<div class="a" style="left:170px;top:238px;width:137px;height:30px;background:#fff;border:1px solid #c6c6c6"></div>
<div class="a" style="left:310px;top:238px;width:1490px;height:30px;background:#fff;border:1px solid #c6c6c6"></div>
<svg style="left:183px;top:245px;" width="20" height="17" viewBox="0 0 20 17"><path d="M2.5 2.5 L16.5 14.5 M16.5 2.5 L2.5 14.5" stroke="#c2c2c2" stroke-width="1.6"/></svg>
<svg style="left:228px;top:245px;" width="20" height="17" viewBox="0 0 20 17"><path d="M2.5 8.5 L7.5 13.5 L17.5 2.5" fill="none" stroke="#c8c8c8" stroke-width="2.4"/></svg>
<svg style="left:271.74px;top:240.94px" width="20.71" height="22.89" viewBox="0 0 44 50" preserveAspectRatio="none"><path d="M25.6 7.2 C25 5.4 23 4.8 21.4 5.8 C19.2 7.2 18.5 10.5 18 13.5 L15.3 30 C14.4 36 12.6 42.6 8.6 44.6 C7.4 45.2 6.2 44.8 5.8 44" fill="none" stroke="#606060" stroke-width="4.56" stroke-linecap="round"/><circle cx="25.2" cy="7.6" r="2.41" fill="#606060"/><circle cx="6.2" cy="43.6" r="2.48" fill="#606060"/><path d="M11.8 17.4 H23.8" stroke="#606060" stroke-width="2.4699999999999998"/><path d="M22 21.4 C24.6 20.6 26.2 21.2 27 24 L30.4 35.5 C31 38 32.4 39.2 34.4 37.6 L36.8 35.2" fill="none" stroke="#606060" stroke-width="4.56" stroke-linecap="round"/><path d="M20.8 37.6 C23.2 37.8 25.4 35.8 28.6 31 L33 24.6 C34.4 22.6 35.8 21.8 37.2 22.2" fill="none" stroke="#606060" stroke-width="2.6599999999999997"/><circle cx="20.6" cy="37.3" r="2.62" fill="#606060"/><circle cx="37" cy="22.4" r="2.62" fill="#606060"/></svg>
<div class="t" style="left:324.70px;top:246.30px;font-size:15px;color:#222;font-weight:normal;">=AVERAGE(D2:D13)</div>
<div class="a" style="left:274px;top:280px;width:79px;height:23px;background:#d2d2d2;"></div>
<div class="a" style="left:0px;top:640px;width:32px;height:23px;background:#d2d2d2;"></div>
<div class="a" style="left:33px;top:280px;width:1px;height:679px;background:#a0a0a0;"></div>
<div class="a" style="left:113px;top:280px;width:1px;height:23px;background:linear-gradient(#dadada,#9c9c9c);"></div>
<div class="a" style="left:113px;top:304px;width:1px;height:655px;background:#d4d4d4;"></div>
<div class="a" style="left:193px;top:280px;width:1px;height:23px;background:linear-gradient(#dadada,#9c9c9c);"></div>
<div class="a" style="left:193px;top:304px;width:1px;height:655px;background:#d4d4d4;"></div>
<div class="a" style="left:273px;top:280px;width:1px;height:23px;background:linear-gradient(#dadada,#9c9c9c);"></div>
<div class="a" style="left:273px;top:304px;width:1px;height:655px;background:#d4d4d4;"></div>
<div class="a" style="left:353px;top:280px;width:1px;height:23px;background:linear-gradient(#dadada,#9c9c9c);"></div>
<div class="a" style="left:353px;top:304px;width:1px;height:655px;background:#d4d4d4;"></div>
<div class="a" style="left:433px;top:280px;width:1px;height:23px;background:linear-gradient(#dadada,#9c9c9c);"></div>
<div class="a" style="left:433px;top:304px;width:1px;height:655px;background:#d4d4d4;"></div>
<div class="a" style="left:513px;top:280px;width:1px;height:23px;background:linear-gradient(#dadada,#9c9c9c);"></div>
<div class="a" style="left:513px;top:304px;width:1px;height:655px;background:#d4d4d4;"></div>
<div class="a" style="left:593px;top:280px;width:1px;height:23px;background:linear-gradient(#dadada,#9c9c9c);"></div>
<div class="a" style="left:593px;top:304px;width:1px;height:655px;background:#d4d4d4;"></div>
<div class="a" style="left:673px;top:280px;width:1px;height:23px;background:linear-gradient(#dadada,#9c9c9c);"></div>
<div class="a" style="left:673px;top:304px;width:1px;height:655px;background:#d4d4d4;"></div>
<div class="a" style="left:753px;top:280px;width:1px;height:23px;background:linear-gradient(#dadada,#9c9c9c);"></div>
<div class="a" style="left:753px;top:304px;width:1px;height:655px;background:#d4d4d4;"></div>
<div class="a" style="left:833px;top:280px;width:1px;height:23px;background:linear-gradient(#dadada,#9c9c9c);"></div>
<div class="a" style="left:833px;top:304px;width:1px;height:655px;background:#d4d4d4;"></div>
<div class="a" style="left:913px;top:280px;width:1px;height:23px;background:linear-gradient(#dadada,#9c9c9c);"></div>
<div class="a" style="left:913px;top:304px;width:1px;height:655px;background:#d4d4d4;"></div>
<div class="a" style="left:993px;top:280px;width:1px;height:23px;background:linear-gradient(#dadada,#9c9c9c);"></div>
<div class="a" style="left:993px;top:304px;width:1px;height:655px;background:#d4d4d4;"></div>
<div class="a" style="left:1073px;top:280px;width:1px;height:23px;background:linear-gradient(#dadada,#9c9c9c);"></div>
<div class="a" style="left:1073px;top:304px;width:1px;height:655px;background:#d4d4d4;"></div>
<div class="a" style="left:1153px;top:280px;width:1px;height:23px;background:linear-gradient(#dadada,#9c9c9c);"></div>
<div class="a" style="left:1153px;top:304px;width:1px;height:655px;background:#d4d4d4;"></div>
<div class="a" style="left:1233px;top:280px;width:1px;height:23px;background:linear-gradient(#dadada,#9c9c9c);"></div>
<div class="a" style="left:1233px;top:304px;width:1px;height:655px;background:#d4d4d4;"></div>
<div class="a" style="left:1313px;top:280px;width:1px;height:23px;background:linear-gradient(#dadada,#9c9c9c);"></div>
<div class="a" style="left:1313px;top:304px;width:1px;height:655px;background:#d4d4d4;"></div>
<div class="a" style="left:1393px;top:280px;width:1px;height:23px;background:linear-gradient(#dadada,#9c9c9c);"></div>
<div class="a" style="left:1393px;top:304px;width:1px;height:655px;background:#d4d4d4;"></div>
<div class="a" style="left:1473px;top:280px;width:1px;height:23px;background:linear-gradient(#dadada,#9c9c9c);"></div>
<div class="a" style="left:1473px;top:304px;width:1px;height:655px;background:#d4d4d4;"></div>
<div class="a" style="left:1553px;top:280px;width:1px;height:23px;background:linear-gradient(#dadada,#9c9c9c);"></div>
<div class="a" style="left:1553px;top:304px;width:1px;height:655px;background:#d4d4d4;"></div>
<div class="a" style="left:1633px;top:280px;width:1px;height:23px;background:linear-gradient(#dadada,#9c9c9c);"></div>
<div class="a" style="left:1633px;top:304px;width:1px;height:655px;background:#d4d4d4;"></div>
<div class="a" style="left:1713px;top:280px;width:1px;height:23px;background:linear-gradient(#dadada,#9c9c9c);"></div>
<div class="a" style="left:1713px;top:304px;width:1px;height:655px;background:#d4d4d4;"></div>
<div class="a" style="left:1793px;top:280px;width:1px;height:23px;background:linear-gradient(#dadada,#9c9c9c);"></div>
<div class="a" style="left:1793px;top:304px;width:1px;height:655px;background:#d4d4d4;"></div>
<div class="a" style="left:0px;top:303px;width:1794px;height:1px;background:#a0a0a0;"></div>
<div class="a" style="left:0px;top:327px;width:33px;height:1px;background:linear-gradient(90deg,#d6d6d6,#a8a8a8);"></div>
<div class="a" style="left:34px;top:327px;width:1760px;height:1px;background:#d4d4d4;"></div>
<div class="a" style="left:0px;top:351px;width:33px;height:1px;background:linear-gradient(90deg,#d6d6d6,#a8a8a8);"></div>
<div class="a" style="left:34px;top:351px;width:1760px;height:1px;background:#d4d4d4;"></div>
<div class="a" style="left:0px;top:375px;width:33px;height:1px;background:linear-gradient(90deg,#d6d6d6,#a8a8a8);"></div>
<div class="a" style="left:34px;top:375px;width:1760px;height:1px;background:#d4d4d4;"></div>
<div class="a" style="left:0px;top:399px;width:33px;height:1px;background:linear-gradient(90deg,#d6d6d6,#a8a8a8);"></div>
<div class="a" style="left:34px;top:399px;width:1760px;height:1px;background:#d4d4d4;"></div>
<div class="a" style="left:0px;top:423px;width:33px;height:1px;background:linear-gradient(90deg,#d6d6d6,#a8a8a8);"></div>
<div class="a" style="left:34px;top:423px;width:1760px;height:1px;background:#d4d4d4;"></div>
<div class="a" style="left:0px;top:447px;width:33px;height:1px;background:linear-gradient(90deg,#d6d6d6,#a8a8a8);"></div>
<div class="a" style="left:34px;top:447px;width:1760px;height:1px;background:#d4d4d4;"></div>
<div class="a" style="left:0px;top:471px;width:33px;height:1px;background:linear-gradient(90deg,#d6d6d6,#a8a8a8);"></div>
<div class="a" style="left:34px;top:471px;width:1760px;height:1px;background:#d4d4d4;"></div>
<div class="a" style="left:0px;top:495px;width:33px;height:1px;background:linear-gradient(90deg,#d6d6d6,#a8a8a8);"></div>
<div class="a" style="left:34px;top:495px;width:1760px;height:1px;background:#d4d4d4;"></div>
<div class="a" style="left:0px;top:519px;width:33px;height:1px;background:linear-gradient(90deg,#d6d6d6,#a8a8a8);"></div>
<div class="a" style="left:34px;top:519px;width:1760px;height:1px;background:#d4d4d4;"></div>
<div class="a" style="left:0px;top:543px;width:33px;height:1px;background:linear-gradient(90deg,#d6d6d6,#a8a8a8);"></div>
<div class="a" style="left:34px;top:543px;width:1760px;height:1px;background:#d4d4d4;"></div>
<div class="a" style="left:0px;top:567px;width:33px;height:1px;background:linear-gradient(90deg,#d6d6d6,#a8a8a8);"></div>
<div class="a" style="left:34px;top:567px;width:1760px;height:1px;background:#d4d4d4;"></div>
<div class="a" style="left:0px;top:591px;width:33px;height:1px;background:linear-gradient(90deg,#d6d6d6,#a8a8a8);"></div>
<div class="a" style="left:34px;top:591px;width:1760px;height:1px;background:#d4d4d4;"></div>
<div class="a" style="left:0px;top:615px;width:33px;height:1px;background:linear-gradient(90deg,#d6d6d6,#a8a8a8);"></div>
<div class="a" style="left:34px;top:615px;width:1760px;height:1px;background:#d4d4d4;"></div>
<div class="a" style="left:0px;top:639px;width:33px;height:1px;background:linear-gradient(90deg,#d6d6d6,#a8a8a8);"></div>
<div class="a" style="left:34px;top:639px;width:1760px;height:1px;background:#d4d4d4;"></div>
<div class="a" style="left:0px;top:663px;width:33px;height:1px;background:linear-gradient(90deg,#d6d6d6,#a8a8a8);"></div>
<div class="a" style="left:34px;top:663px;width:1760px;height:1px;background:#d4d4d4;"></div>
<div class="a" style="left:0px;top:687px;width:33px;height:1px;background:linear-gradient(90deg,#d6d6d6,#a8a8a8);"></div>
<div class="a" style="left:34px;top:687px;width:1760px;height:1px;background:#d4d4d4;"></div>
<div class="a" style="left:0px;top:711px;width:33px;height:1px;background:linear-gradient(90deg,#d6d6d6,#a8a8a8);"></div>
<div class="a" style="left:34px;top:711px;width:1760px;height:1px;background:#d4d4d4;"></div>
<div class="a" style="left:0px;top:735px;width:33px;height:1px;background:linear-gradient(90deg,#d6d6d6,#a8a8a8);"></div>
<div class="a" style="left:34px;top:735px;width:1760px;height:1px;background:#d4d4d4;"></div>
<div class="a" style="left:0px;top:759px;width:33px;height:1px;background:linear-gradient(90deg,#d6d6d6,#a8a8a8);"></div>
<div class="a" style="left:34px;top:759px;width:1760px;height:1px;background:#d4d4d4;"></div>
<div class="a" style="left:0px;top:783px;width:33px;height:1px;background:linear-gradient(90deg,#d6d6d6,#a8a8a8);"></div>
<div class="a" style="left:34px;top:783px;width:1760px;height:1px;background:#d4d4d4;"></div>
<div class="a" style="left:0px;top:807px;width:33px;height:1px;background:linear-gradient(90deg,#d6d6d6,#a8a8a8);"></div>
<div class="a" style="left:34px;top:807px;width:1760px;height:1px;background:#d4d4d4;"></div>
<div class="a" style="left:0px;top:831px;width:33px;height:1px;background:linear-gradient(90deg,#d6d6d6,#a8a8a8);"></div>
<div class="a" style="left:34px;top:831px;width:1760px;height:1px;background:#d4d4d4;"></div>
<div class="a" style="left:0px;top:855px;width:33px;height:1px;background:linear-gradient(90deg,#d6d6d6,#a8a8a8);"></div>
<div class="a" style="left:34px;top:855px;width:1760px;height:1px;background:#d4d4d4;"></div>
<div class="a" style="left:0px;top:879px;width:33px;height:1px;background:linear-gradient(90deg,#d6d6d6,#a8a8a8);"></div>
<div class="a" style="left:34px;top:879px;width:1760px;height:1px;background:#d4d4d4;"></div>
<div class="a" style="left:0px;top:903px;width:33px;height:1px;background:linear-gradient(90deg,#d6d6d6,#a8a8a8);"></div>
<div class="a" style="left:34px;top:903px;width:1760px;height:1px;background:#d4d4d4;"></div>
<div class="a" style="left:0px;top:927px;width:33px;height:1px;background:linear-gradient(90deg,#d6d6d6,#a8a8a8);"></div>
<div class="a" style="left:34px;top:927px;width:1760px;height:1px;background:#d4d4d4;"></div>
<div class="a" style="left:0px;top:951px;width:33px;height:1px;background:linear-gradient(90deg,#d6d6d6,#a8a8a8);"></div>
<div class="a" style="left:34px;top:951px;width:1760px;height:1px;background:#d4d4d4;"></div>
<div class="a" style="left:273px;top:302px;width:81px;height:2px;background:#217346;"></div>
<div class="a" style="left:32px;top:639px;width:2px;height:25px;background:#217346;"></div>
<svg style="left:14px;top:284px" width="17" height="16"><path d="M0.4 15.7 L16 0.4 V15.7 Z" fill="#b4b4b4"/></svg>
<div class="t" style="left:-226.50px;width:600px;text-align:center;top:285.06px;font-size:16px;color:#222;font-weight:normal;">A</div>
<div class="t" style="left:-146.50px;width:600px;text-align:center;top:285.06px;font-size:16px;color:#222;font-weight:normal;">B</div>
<div class="t" style="left:-66.50px;width:600px;text-align:center;top:285.06px;font-size:16px;color:#222;font-weight:normal;">C</div>
<div class="t" style="left:13.50px;width:600px;text-align:center;top:285.06px;font-size:16px;color:#217346;font-weight:normal;">D</div>
<div class="t" style="left:93.50px;width:600px;text-align:center;top:285.06px;font-size:16px;color:#222;font-weight:normal;">E</div>
<div class="t" style="left:173.50px;width:600px;text-align:center;top:285.06px;font-size:16px;color:#222;font-weight:normal;">F</div>
<div class="t" style="left:253.50px;width:600px;text-align:center;top:285.06px;font-size:16px;color:#222;font-weight:normal;">G</div>
<div class="t" style="left:333.50px;width:600px;text-align:center;top:285.06px;font-size:16px;color:#222;font-weight:normal;">H</div>
<div class="t" style="left:413.50px;width:600px;text-align:center;top:285.06px;font-size:16px;color:#222;font-weight:normal;">I</div>
<div class="t" style="left:493.50px;width:600px;text-align:center;top:285.06px;font-size:16px;color:#222;font-weight:normal;">J</div>
<div class="t" style="left:573.50px;width:600px;text-align:center;top:285.06px;font-size:16px;color:#222;font-weight:normal;">K</div>
<div class="t" style="left:653.50px;width:600px;text-align:center;top:285.06px;font-size:16px;color:#222;font-weight:normal;">L</div>
<div class="t" style="left:733.50px;width:600px;text-align:center;top:285.06px;font-size:16px;color:#222;font-weight:normal;">M</div>
<div class="t" style="left:813.50px;width:600px;text-align:center;top:285.06px;font-size:16px;color:#222;font-weight:normal;">N</div>
<div class="t" style="left:893.50px;width:600px;text-align:center;top:285.06px;font-size:16px;color:#222;font-weight:normal;">O</div>
<div class="t" style="left:973.50px;width:600px;text-align:center;top:285.06px;font-size:16px;color:#222;font-weight:normal;">P</div>
<div class="t" style="left:1053.50px;width:600px;text-align:center;top:285.06px;font-size:16px;color:#222;font-weight:normal;">Q</div>
<div class="t" style="left:1133.50px;width:600px;text-align:center;top:285.06px;font-size:16px;color:#222;font-weight:normal;">R</div>
<div class="t" style="left:1213.50px;width:600px;text-align:center;top:285.06px;font-size:16px;color:#222;font-weight:normal;">S</div>
<div class="t" style="left:1293.50px;width:600px;text-align:center;top:285.06px;font-size:16px;color:#222;font-weight:normal;">T</div>
<div class="t" style="left:1373.50px;width:600px;text-align:center;top:285.06px;font-size:16px;color:#222;font-weight:normal;">U</div>
<div class="t" style="left:1453.50px;width:600px;text-align:center;top:285.06px;font-size:16px;color:#222;font-weight:normal;">V</div>
<div class="t" style="left:-283.00px;width:600px;text-align:center;top:309.06px;font-size:16px;color:#222;font-weight:normal;">1</div>
<div class="t" style="left:-283.00px;width:600px;text-align:center;top:333.06px;font-size:16px;color:#222;font-weight:normal;">2</div>
<div class="t" style="left:-283.00px;width:600px;text-align:center;top:357.06px;font-size:16px;color:#222;font-weight:normal;">3</div>
<div class="t" style="left:-283.00px;width:600px;text-align:center;top:381.06px;font-size:16px;color:#222;font-weight:normal;">4</div>
<div class="t" style="left:-283.00px;width:600px;text-align:center;top:405.06px;font-size:16px;color:#222;font-weight:normal;">5</div>
<div class="t" style="left:-283.00px;width:600px;text-align:center;top:429.06px;font-size:16px;color:#222;font-weight:normal;">6</div>
<div class="t" style="left:-283.00px;width:600px;text-align:center;top:453.06px;font-size:16px;color:#222;font-weight:normal;">7</div>
<div class="t" style="left:-283.00px;width:600px;text-align:center;top:477.06px;font-size:16px;color:#222;font-weight:normal;">8</div>
<div class="t" style="left:-283.00px;width:600px;text-align:center;top:501.06px;font-size:16px;color:#222;font-weight:normal;">9</div>
<div class="t" style="left:-283.00px;width:600px;text-align:center;top:525.06px;font-size:16px;color:#222;font-weight:normal;">10</div>
<div class="t" style="left:-283.00px;width:600px;text-align:center;top:549.06px;font-size:16px;color:#222;font-weight:normal;">11</div>
<div class="t" style="left:-283.00px;width:600px;text-align:center;top:573.06px;font-size:16px;color:#222;font-weight:normal;">12</div>
<div class="t" style="left:-283.00px;width:600px;text-align:center;top:597.06px;font-size:16px;color:#222;font-weight:normal;">13</div>
<div class="t" style="left:-283.00px;width:600px;text-align:center;top:621.06px;font-size:16px;color:#222;font-weight:normal;">14</div>
<div class="t" style="left:-283.00px;width:600px;text-align:center;top:645.06px;font-size:16px;color:#217346;font-weight:normal;">15</div>
<div class="t" style="left:-283.00px;width:600px;text-align:center;top:669.06px;font-size:16px;color:#222;font-weight:normal;">16</div>
<div class="t" style="left:-283.00px;width:600px;text-align:center;top:693.06px;font-size:16px;color:#222;font-weight:normal;">17</div>
<div class="t" style="left:-283.00px;width:600px;text-align:center;top:717.06px;font-size:16px;color:#222;font-weight:normal;">18</div>
<div class="t" style="left:-283.00px;width:600px;text-align:center;top:741.06px;font-size:16px;color:#222;font-weight:normal;">19</div>
<div class="t" style="left:-283.00px;width:600px;text-align:center;top:765.06px;font-size:16px;color:#222;font-weight:normal;">20</div>
<div class="t" style="left:-283.00px;width:600px;text-align:center;top:789.06px;font-size:16px;color:#222;font-weight:normal;">21</div>
<div class="t" style="left:-283.00px;width:600px;text-align:center;top:813.06px;font-size:16px;color:#222;font-weight:normal;">22</div>
<div class="t" style="left:-283.00px;width:600px;text-align:center;top:837.06px;font-size:16px;color:#222;font-weight:normal;">23</div>
<div class="t" style="left:-283.00px;width:600px;text-align:center;top:861.06px;font-size:16px;color:#222;font-weight:normal;">24</div>
<div class="t" style="left:-283.00px;width:600px;text-align:center;top:885.06px;font-size:16px;color:#222;font-weight:normal;">25</div>
<div class="t" style="left:-283.00px;width:600px;text-align:center;top:909.06px;font-size:16px;color:#222;font-weight:normal;">26</div>
<div class="t" style="left:-283.00px;width:600px;text-align:center;top:933.06px;font-size:16px;color:#222;font-weight:normal;">27</div>
<div class="t" style="left:-283.00px;width:600px;text-align:center;top:957.06px;font-size:16px;color:#222;font-weight:normal;">28</div>
<div class="t" style="left:-66.30px;width:600px;text-align:center;top:309.46px;font-size:16px;color:#000;font-weight:bold;transform:scaleX(0.94)">Year</div>
<div class="t" style="left:14.00px;width:600px;text-align:center;top:309.46px;font-size:16px;color:#000;font-weight:bold;transform:scaleX(0.89)">Sales</div>
<div class="t" style="left:-330.50px;width:600px;text-align:right;top:333.46px;font-size:16px;color:#000;font-weight:normal;">2006</div>
<div class="t" style="left:-250.50px;width:600px;text-align:right;top:333.46px;font-size:16px;color:#000;font-weight:normal;">42</div>
<div class="t" style="left:-330.50px;width:600px;text-align:right;top:357.46px;font-size:16px;color:#000;font-weight:normal;">2007</div>
<div class="t" style="left:-250.50px;width:600px;text-align:right;top:357.46px;font-size:16px;color:#000;font-weight:normal;">47</div>
<div class="t" style="left:-330.50px;width:600px;text-align:right;top:381.46px;font-size:16px;color:#000;font-weight:normal;">2008</div>
<div class="t" style="left:-250.50px;width:600px;text-align:right;top:381.46px;font-size:16px;color:#000;font-weight:normal;">56</div>
<div class="t" style="left:-330.50px;width:600px;text-align:right;top:405.46px;font-size:16px;color:#000;font-weight:normal;">2009</div>
<div class="t" style="left:-250.50px;width:600px;text-align:right;top:405.46px;font-size:16px;color:#000;font-weight:normal;">43</div>
<div class="t" style="left:-330.50px;width:600px;text-align:right;top:429.46px;font-size:16px;color:#000;font-weight:normal;">2010</div>
<div class="t" style="left:-250.50px;width:600px;text-align:right;top:429.46px;font-size:16px;color:#000;font-weight:normal;">54</div>
<div class="t" style="left:-330.50px;width:600px;text-align:right;top:453.46px;font-size:16px;color:#000;font-weight:normal;">2011</div>
<div class="t" style="left:-250.50px;width:600px;text-align:right;top:453.46px;font-size:16px;color:#000;font-weight:normal;">61</div>
<div class="t" style="left:-330.50px;width:600px;text-align:right;top:477.46px;font-size:16px;color:#000;font-weight:normal;">2012</div>
<div class="t" style="left:-250.50px;width:600px;text-align:right;top:477.46px;font-size:16px;color:#000;font-weight:normal;">48</div>
<div class="t" style="left:-330.50px;width:600px;text-align:right;top:501.46px;font-size:16px;color:#000;font-weight:normal;">2013</div>
<div class="t" style="left:-250.50px;width:600px;text-align:right;top:501.46px;font-size:16px;color:#000;font-weight:normal;">63</div>
<div class="t" style="left:-330.50px;width:600px;text-align:right;top:525.46px;font-size:16px;color:#000;font-weight:normal;">2014</div>
<div class="t" style="left:-250.50px;width:600px;text-align:right;top:525.46px;font-size:16px;color:#000;font-weight:normal;">54</div>
<div class="t" style="left:-330.50px;width:600px;text-align:right;top:549.46px;font-size:16px;color:#000;font-weight:normal;">2015</div>
<div class="t" style="left:-250.50px;width:600px;text-align:right;top:549.46px;font-size:16px;color:#000;font-weight:normal;">59</div>
<div class="t" style="left:-330.50px;width:600px;text-align:right;top:573.46px;font-size:16px;color:#000;font-weight:normal;">2016</div>
<div class="t" style="left:-250.50px;width:600px;text-align:right;top:573.46px;font-size:16px;color:#000;font-weight:normal;">49</div>
<div class="t" style="left:-330.50px;width:600px;text-align:right;top:597.46px;font-size:16px;color:#000;font-weight:normal;">2017</div>
<div class="t" style="left:-250.50px;width:600px;text-align:right;top:597.46px;font-size:16px;color:#000;font-weight:normal;">53</div>
<div class="t" style="left:197.50px;top:645.46px;font-size:16px;color:#000;font-weight:bold;transform:scaleX(1.03);transform-origin:0 0">Mean:</div>
<div class="t" style="left:-250.50px;width:600px;text-align:right;top:645.46px;font-size:16px;color:#000;font-weight:normal;">52.41667</div>
<div class="a" style="left:272px;top:638px;width:83px;height:27px;border:2px solid #217346"></div>
<div class="a" style="left:350px;top:660px;width:7px;height:7px;background:#ffffff;"></div>
<div class="a" style="left:351px;top:661px;width:5px;height:5px;background:#217346;"></div>
</body></html>
